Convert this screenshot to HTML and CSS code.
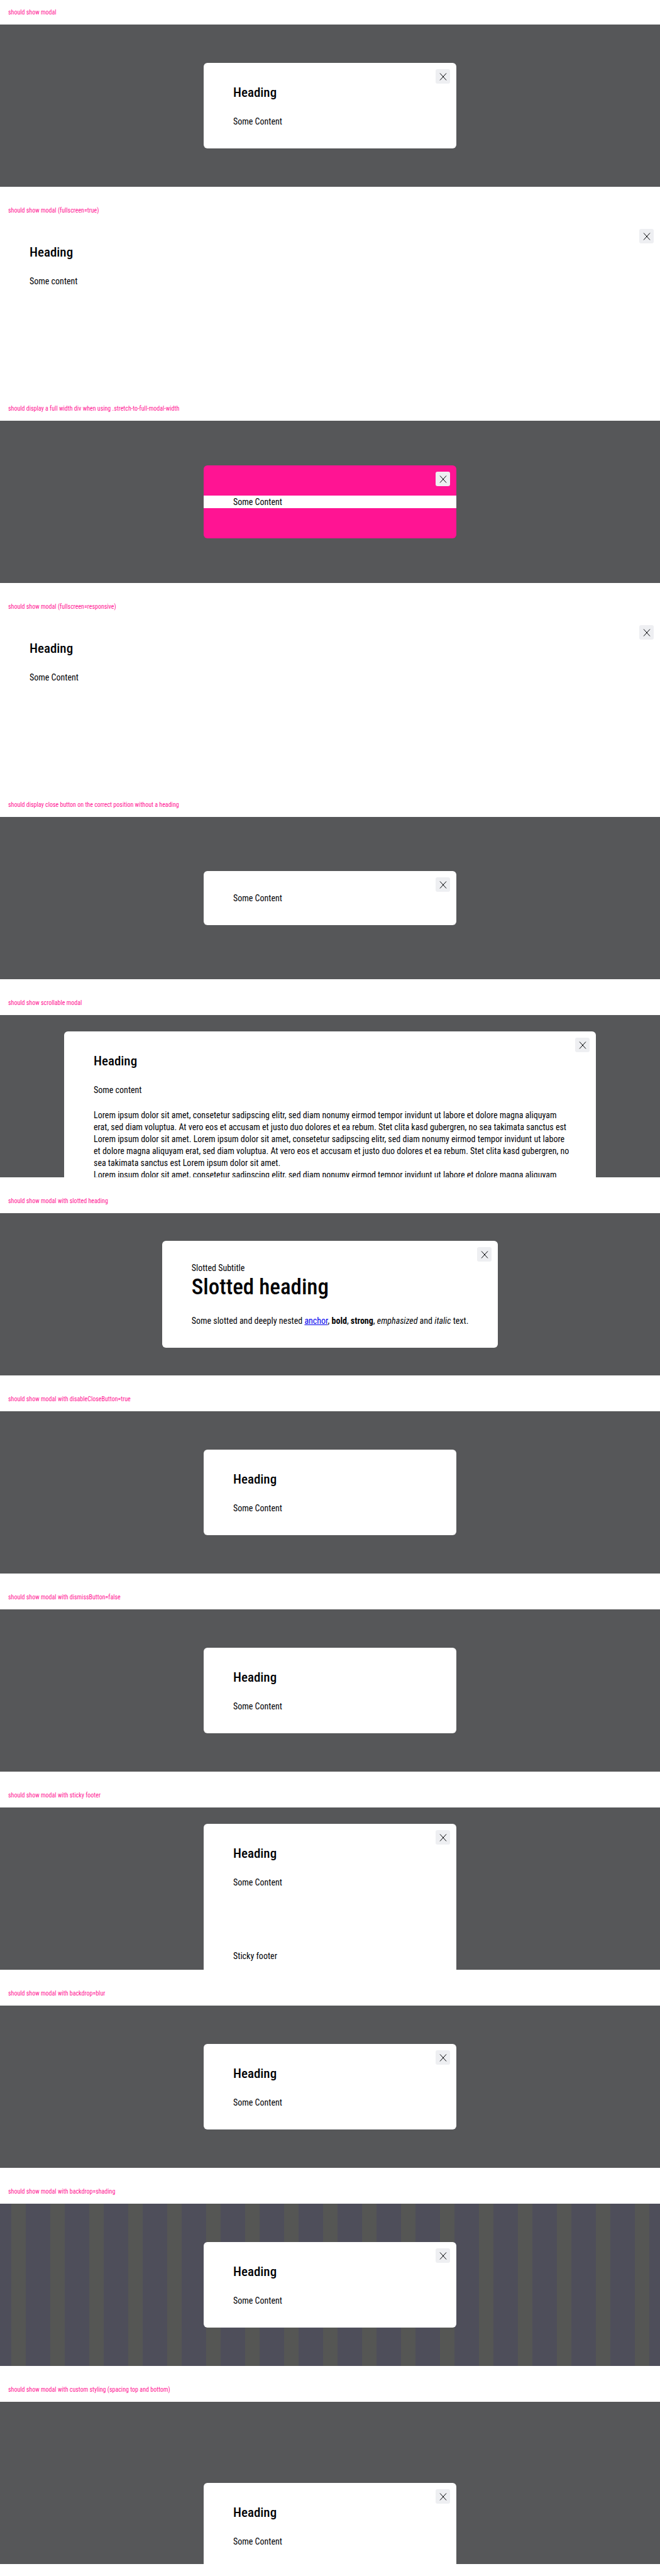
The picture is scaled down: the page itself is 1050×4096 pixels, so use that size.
FILE: index.html
```
<!DOCTYPE html>
<html lang="en">
<head>
<meta charset="utf-8">
<title>Modal states</title>
<link rel="stylesheet" href="styles.css">
</head>
<body>
<svg class="sprite" aria-hidden="true">
  <symbol id="icon-close" viewBox="0 0 12 12">
    <path d="M1 0.5 11 11.5M11 0.5 1 11.5" fill="none" stroke="currentColor"/>
  </symbol>
</svg>

<section class="case">
  <p class="label">should show modal</p>
  <div class="stage">
    <div class="modal" role="dialog">
      <button class="close" type="button" aria-label="Close"><svg><use href="#icon-close"/></svg></button>
      <h2 class="heading">Heading</h2>
      <p class="text">Some Content</p>
    </div>
  </div>
</section>

<section class="case">
  <p class="label">should show modal (fullscreen=true)</p>
  <div class="stage">
    <div class="modal fullscreen" role="dialog">
      <button class="close" type="button" aria-label="Close"><svg><use href="#icon-close"/></svg></button>
      <h2 class="heading">Heading</h2>
      <p class="text">Some content</p>
    </div>
  </div>
</section>

<section class="case">
  <p class="label">should display a full width div when using .stretch-to-full-modal-width</p>
  <div class="stage">
    <div class="modal pink" role="dialog">
      <button class="close" type="button" aria-label="Close"><svg><use href="#icon-close"/></svg></button>
      <p class="text stretch">Some Content</p>
    </div>
  </div>
</section>

<section class="case">
  <p class="label">should show modal (fullscreen=responsive)</p>
  <div class="stage">
    <div class="modal fullscreen" role="dialog">
      <button class="close" type="button" aria-label="Close"><svg><use href="#icon-close"/></svg></button>
      <h2 class="heading">Heading</h2>
      <p class="text">Some Content</p>
    </div>
  </div>
</section>

<section class="case">
  <p class="label">should display close button on the correct position without a heading</p>
  <div class="stage">
    <div class="modal" role="dialog">
      <button class="close" type="button" aria-label="Close"><svg><use href="#icon-close"/></svg></button>
      <p class="text">Some Content</p>
    </div>
  </div>
</section>

<section class="case">
  <p class="label">should show scrollable modal</p>
  <div class="stage top">
    <div class="modal wide" role="dialog">
      <button class="close" type="button" aria-label="Close"><svg><use href="#icon-close"/></svg></button>
      <h2 class="heading">Heading</h2>
      <p class="text">Some content</p>
      <div class="text lorem">
        Lorem ipsum dolor sit amet, consetetur sadipscing elitr, sed diam nonumy eirmod tempor invidunt ut labore et dolore magna aliquyam<br>
        erat, sed diam voluptua. At vero eos et accusam et justo duo dolores et ea rebum. Stet clita kasd gubergren, no sea takimata sanctus est<br>
        Lorem ipsum dolor sit amet. Lorem ipsum dolor sit amet, consetetur sadipscing elitr, sed diam nonumy eirmod tempor invidunt ut labore<br>
        et dolore magna aliquyam erat, sed diam voluptua. At vero eos et accusam et justo duo dolores et ea rebum. Stet clita kasd gubergren, no<br>
        sea takimata sanctus est Lorem ipsum dolor sit amet.<br>
        Lorem ipsum dolor sit amet, consetetur sadipscing elitr, sed diam nonumy eirmod tempor invidunt ut labore et dolore magna aliquyam
      </div>
    </div>
  </div>
</section>

<section class="case">
  <p class="label">should show modal with slotted heading</p>
  <div class="stage">
    <div class="modal slotted" role="dialog">
      <button class="close" type="button" aria-label="Close"><svg><use href="#icon-close"/></svg></button>
      <p class="text">Slotted Subtitle</p>
      <h2 class="heading large">Slotted heading</h2>
      <p class="text">Some slotted and deeply nested <a href="#">anchor</a>, <b>bold</b>, <strong>strong</strong>, <em>emphasized</em> and <i>italic</i> text.</p>
    </div>
  </div>
</section>

<section class="case">
  <p class="label">should show modal with disableCloseButton=true</p>
  <div class="stage">
    <div class="modal" role="dialog">
      <h2 class="heading">Heading</h2>
      <p class="text">Some Content</p>
    </div>
  </div>
</section>

<section class="case">
  <p class="label">should show modal with dismissButton=false</p>
  <div class="stage">
    <div class="modal" role="dialog">
      <h2 class="heading">Heading</h2>
      <p class="text">Some Content</p>
    </div>
  </div>
</section>

<section class="case">
  <p class="label">should show modal with sticky footer</p>
  <div class="stage top">
    <div class="modal" role="dialog">
      <button class="close" type="button" aria-label="Close"><svg><use href="#icon-close"/></svg></button>
      <h2 class="heading">Heading</h2>
      <p class="text">Some Content</p>
      <p class="text sticky-footer">Sticky footer</p>
    </div>
  </div>
</section>

<section class="case">
  <p class="label">should show modal with backdrop=blur</p>
  <div class="stage">
    <div class="modal" role="dialog">
      <button class="close" type="button" aria-label="Close"><svg><use href="#icon-close"/></svg></button>
      <h2 class="heading">Heading</h2>
      <p class="text">Some Content</p>
    </div>
  </div>
</section>

<section class="case">
  <p class="label">should show modal with backdrop=shading</p>
  <div class="stage shading">
    <div class="modal" role="dialog">
      <button class="close" type="button" aria-label="Close"><svg><use href="#icon-close"/></svg></button>
      <h2 class="heading">Heading</h2>
      <p class="text">Some Content</p>
    </div>
  </div>
</section>

<section class="case">
  <p class="label">should show modal with custom styling (spacing top and bottom)</p>
  <div class="stage top spaced">
    <div class="modal" role="dialog">
      <button class="close" type="button" aria-label="Close"><svg><use href="#icon-close"/></svg></button>
      <h2 class="heading">Heading</h2>
      <p class="text">Some Content</p>
    </div>
  </div>
</section>
</body>
</html>
```

FILE: styles.css
```
* {
  box-sizing: border-box;
}

body {
  margin: 0;
  background: #fff;
  color: #010205;
  font: 14px/19px "Roboto Condensed", Roboto, "Liberation Sans", sans-serif;
}

h2,
p {
  margin: 0;
}

.sprite {
  position: absolute;
  width: 0;
  height: 0;
}

.case {
  padding-bottom: 18px;
}

.label {
  padding: 0 13px;
  color: #ff1493;
  font-size: 10px;
  line-height: 39px;
}

.stage {
  display: flex;
  flex-direction: column;
  align-items: center;
  justify-content: center;
  height: 258px;
  overflow: hidden;
  background: #565759;
}

/* modals taller than the viewport start near its top edge */
.stage.top {
  justify-content: flex-start;
  padding-top: 26px;
}

.stage.spaced {
  padding-top: 129px;
}

.stage.shading {
  background: linear-gradient(90deg, #4e4e5a 20px, #555654 20px 43px, #4e4e5a 43px) center / 62px 100%;
}

.modal {
  position: relative;
  display: flex;
  flex-direction: column;
  flex-shrink: 0;
  width: 402px;
  padding: 34px 47px 33px;
  border-radius: 6px;
  background: #fff;
}

.top .modal {
  min-height: 100%;
  border-radius: 6px 6px 0 0;
}

.modal.fullscreen {
  width: 100%;
  height: 100%;
  border-radius: 0;
}

.modal.wide {
  width: calc(100% - 204px);
}

.modal.slotted {
  width: auto;
  max-width: 100%;
}

.modal.pink {
  padding-block: 48px;
  background: #ff1493;
}

.stretch {
  margin: 0 -47px;
  padding: 0 47px;
  background: #fff;
  line-height: 20px;
}

.close {
  position: absolute;
  top: 10px;
  right: 10px;
  display: grid;
  place-items: center;
  width: 23px;
  height: 23px;
  padding: 0;
  border: 0;
  border-radius: 3px;
  background: #eeeff2;
  color: #010205;
}

.close svg {
  width: 12px;
  height: 12px;
}

.heading {
  margin-bottom: 23px;
  font-size: 21px;
  font-weight: 500;
  line-height: 27px;
}

.heading.large {
  font-size: 35px;
  line-height: 42px;
}

.text a {
  color: #00e;
}

.lorem {
  margin-top: 21px;
  white-space: nowrap;
}

.sticky-footer {
  margin-top: auto;
}

.top .modal:has(.sticky-footer) {
  padding-bottom: 12px;
}
```
